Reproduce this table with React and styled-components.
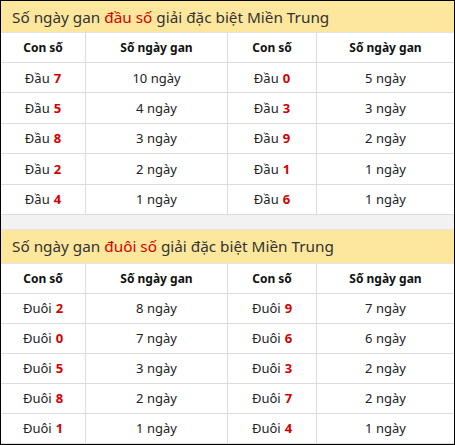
import React from 'react';
import styled, { createGlobalStyle } from 'styled-components';

const GlobalStyle = createGlobalStyle`
  body {
    margin: 0;
    background: #fff;
    font-family: "Noto Sans", "Open Sans", sans-serif;
    color: #222;
  }
`;

const Frame = styled.div`
  width: 455px;
  height: 445px;
  box-sizing: border-box;
  border: 1px solid #000;
  overflow: hidden;
  background: #fff;
`;

const Title = styled.div`
  height: ${(p) => p.$h}px;
  box-sizing: border-box;
  background: #fde79d;
  display: flex;
  align-items: center;
  padding-left: 11px;
  font-size: 15.3px;
  color: #333;
  border-bottom: 1px solid #e3e3e3;
  em {
    font-style: normal;
    color: #d40000;
  }
`;

const Grid = styled.div`
  display: grid;
  grid-template-columns: 85px 142px 89px 1fr;
`;

const Cell = styled.div`
  height: ${(p) => p.$h}px;
  box-sizing: border-box;
  display: flex;
  align-items: center;
  justify-content: center;
  font-size: ${(p) => (p.$head ? 12 : 13)}px;
  font-weight: ${(p) => (p.$head ? 700 : 400)};
  color: ${(p) => (p.$head ? '#111' : '#222')};
  border-bottom: 1px solid #dcdcdc;
  border-right: 1px solid #dcdcdc;
  &:nth-child(4n) {
    border-right: none;
  }
  b {
    color: #d40000;
    font-weight: 700;
    margin-left: 4px;
  }
`;

const Gap = styled.div`
  height: 14px;
  background: #f2f2f2;
  border-bottom: 1px solid #e3e3e3;
`;

const dau = [
  [7, 10, 0, 5],
  [5, 4, 3, 3],
  [8, 3, 9, 2],
  [2, 2, 1, 1],
  [4, 1, 6, 1],
];

const duoi = [
  [2, 8, 9, 7],
  [0, 7, 6, 6],
  [5, 3, 3, 2],
  [8, 2, 7, 2],
  [1, 1, 4, 1],
];

const Table = ({ label, prefix, rows, titleH, rowH }) => (
  <>
    <Title $h={titleH}>
      Số ngày gan&nbsp;<em>{label}</em>&nbsp;giải đặc biệt Miền Trung
    </Title>
    <Grid>
      <Cell $head $h={30}>Con số</Cell>
      <Cell $head $h={30}>Số ngày gan</Cell>
      <Cell $head $h={30}>Con số</Cell>
      <Cell $head $h={30}>Số ngày gan</Cell>
      {rows.map(([a, da, b, db], i) => (
        <React.Fragment key={i}>
          <Cell $h={rowH}>
            {prefix}
            <b>{a}</b>
          </Cell>
          <Cell $h={rowH}>{da} ngày</Cell>
          <Cell $h={rowH}>
            {prefix}
            <b>{b}</b>
          </Cell>
          <Cell $h={rowH}>{db} ngày</Cell>
        </React.Fragment>
      ))}
    </Grid>
  </>
);

const App = () => (
  <>
    <GlobalStyle />
    <Frame>
      <Table label="đầu số" prefix="Đầu" rows={dau} titleH={32} rowH={30.4} />
      <Gap />
      <Table label="đuôi số" prefix="Đuôi" rows={duoi} titleH={34} rowH={30} />
    </Frame>
  </>
);

export default App;
